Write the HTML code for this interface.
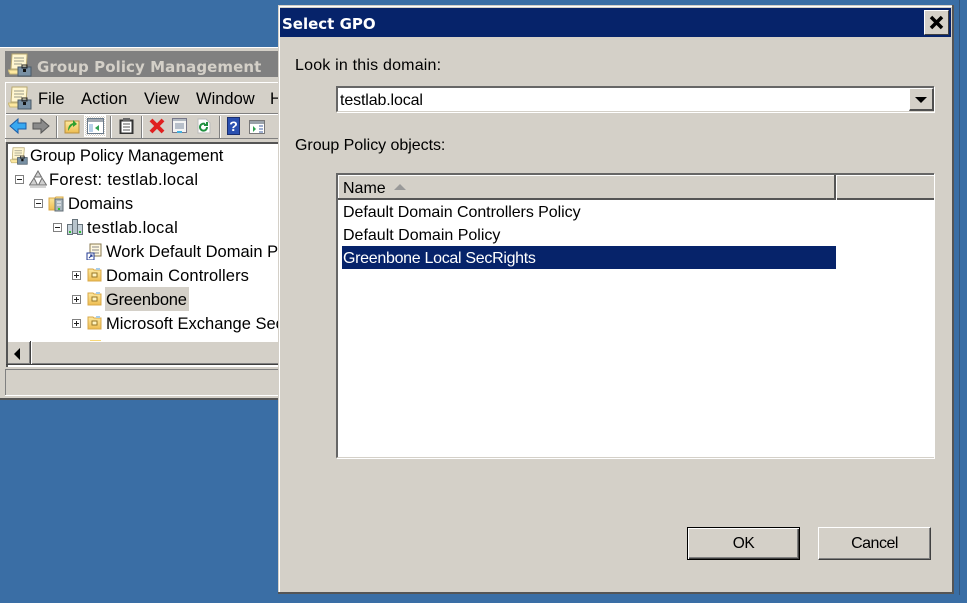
<!DOCTYPE html>
<html><head><meta charset="utf-8"><style>
html,body{margin:0;padding:0;width:967px;height:603px;overflow:hidden;background:#3a6ea5}
body{position:relative;font-family:"Liberation Sans",sans-serif;font-size:16px;color:#000}
div,svg,span.t{position:absolute}
.t{white-space:nowrap;line-height:20px;font-size:16.5px}
.b{background:#d4d0c8}
.pm{width:7px;height:7px;border:1px solid #808080;background:#fff}
.pm:before{content:"";position:absolute;left:1px;top:3px;width:5px;height:1px;background:#222}
.pm.p:after{content:"";position:absolute;left:3px;top:1px;width:1px;height:5px;background:#222}
.sep{width:1px;height:22px;background:#808080;border-right:1px solid #fff}
</style></head><body>
<svg width="0" height="0" style="position:absolute"><defs>
<linearGradient id="g1" x1="0" y1="0" x2="0" y2="1"><stop offset="0" stop-color="#fde9a0"/><stop offset="1" stop-color="#eebc50"/></linearGradient>
<symbol id="scroll" viewBox="0 0 24 24"><path d="M4 1h15v2l-1 13H3z" fill="#fff6d0" stroke="#b8a870"/><path d="M0 17h11v4H2z" fill="#fde8a0" stroke="#c8b878"/><path d="M6 5h10M6 8h10M6 11h8" stroke="#9a9a88"/><rect x="10" y="14" width="13" height="9" fill="#7890a4" stroke="#4a5a68"/><rect x="14" y="12" width="5" height="3" fill="none" stroke="#222"/><rect x="15" y="16" width="3" height="3" fill="#111"/></symbol>
<symbol id="folder" viewBox="0 0 15 15"><path d="M1 2h5l1 1h7v11H1z" fill="url(#g1)" stroke="#d8a848"/><rect x="5" y="6" width="5" height="4" fill="#fff4c0" stroke="#987828"/><rect x="9" y="1" width="4" height="2" fill="#a8cce8"/></symbol>
</defs></svg>

<div style="left:959px;top:0;width:1px;height:595px;background:#33557a"></div>

<!-- left window -->
<div class="b" style="left:0;top:47px;width:278px;height:353px;border-top:1px solid #fff;border-bottom:2px solid #555;box-sizing:border-box"></div>
<div style="left:5px;top:51px;width:273px;height:26px;background:#808080"></div>
<svg style="left:8px;top:53px" width="24" height="24"><use href="#scroll"/></svg>
<span class="t" style="left:37px;top:57px;color:#d4d0c8;font-family:'DejaVu Sans',sans-serif;font-weight:bold;font-size:15px;letter-spacing:.08px">Group Policy Management</span>
<div style="left:5px;top:82px;width:273px;height:1px;background:#fff"></div>
<div style="left:5px;top:82px;width:1px;height:60px;background:#fff"></div>
<svg style="left:8px;top:86px" width="24" height="24"><use href="#scroll"/></svg>
<span class="t" style="left:38px;top:89px">File</span>
<span class="t" style="left:81px;top:89px;letter-spacing:.1px">Action</span>
<span class="t" style="left:144px;top:89px">View</span>
<span class="t" style="left:196px;top:89px">Window</span>
<span class="t" style="left:270px;top:89px;width:8px;overflow:hidden">H</span>
<div style="left:6px;top:113px;width:272px;height:1px;background:#808080"></div>
<div style="left:6px;top:114px;width:272px;height:1px;background:#fff"></div>

<!-- toolbar -->
<svg style="left:9px;top:117px" width="18" height="18"><path d="M1 9l8-7v4h8v6H9v4z" fill="#38a8f0" stroke="#1a5ca8"/></svg>
<svg style="left:32px;top:117px" width="18" height="18"><path d="M17 9l-8-7v4H1v6h8v4z" fill="#8a8a8a" stroke="#555"/></svg>
<div class="sep" style="left:56px;top:116px"></div>
<svg style="left:64px;top:117px" width="16" height="17"><path d="M1 4h14v12H1z" fill="url(#g1)" stroke="#b89040"/><path d="M4 14c0-5 2-7 5-8V3l4 4-4 3V8c-2 1-3 3-5 6z" fill="#30a030"/></svg>
<div style="left:84px;top:115px;width:22px;height:22px;border:1px solid #fff;box-sizing:border-box;background:repeating-conic-gradient(#fff 0 25%,#d4d0c8 0 50%) 0 0/2px 2px"></div>
<svg style="left:87px;top:118px" width="17" height="17"><rect x=".5" y=".5" width="16" height="15" fill="#fff" stroke="#6a7a8a"/><rect x="1" y="1" width="15" height="3" fill="#a0a8b0"/><rect x="2" y="6" width="4" height="8" fill="#b8d0e8"/><path d="M12 7v6l-4-3z" fill="#30a050"/></svg>
<div class="sep" style="left:110px;top:116px"></div>
<svg style="left:119px;top:118px" width="15" height="16"><rect x="1.500" y="2.500" width="12" height="13" fill="#fff" stroke="#333" stroke-width="2"/><rect x="4" y="0" width="7" height="3" fill="#666"/><path d="M4 6h7M4 9h7M4 12h7" stroke="#555"/></svg>
<div class="sep" style="left:141px;top:116px"></div>
<svg style="left:148px;top:117px" width="18" height="18"><path d="M3 3l12 12M15 3L3 15" stroke="#e02020" stroke-width="4"/></svg>
<svg style="left:172px;top:118px" width="16" height="16"><rect x=".5" y=".5" width="14" height="14" fill="#f4f4f4" stroke="#778"/><rect x="1" y="1" width="13" height="2" fill="#b0b8c0"/><path d="M3 6h9M3 8h9M3 10h9" stroke="#7a8aa0"/><rect x="5" y="13" width="5" height="2" fill="#40b0e0"/></svg>
<svg style="left:197px;top:118px" width="14" height="16"><path d="M1 1h8l4 4v10H1z" fill="#fff" stroke="#bbb"/><path d="M10 9a3.500 3.500 0 1 1-2-3M10 4v3H7" fill="none" stroke="#209040" stroke-width="2"/></svg>
<div class="sep" style="left:219px;top:116px"></div>
<div style="left:227px;top:117px;width:11px;height:16px;background:#2a50b0;border:1px solid #1a2f70;color:#fff;font:bold 14px/16px 'Liberation Sans',sans-serif;text-align:center">?</div>
<svg style="left:249px;top:120px" width="16" height="15"><rect x=".5" y=".5" width="15" height="13" fill="#fff" stroke="#777"/><rect x="1" y="1" width="14" height="3" fill="#9aa2aa"/><path d="M4 6v6l3-3z" fill="#30a050"/><path d="M10 6h4M10 9h4M10 12h4" stroke="#4060a0"/></svg>
<div style="left:5px;top:138px;width:273px;height:1px;background:#808080"></div>

<!-- tree -->
<div style="left:6px;top:142px;width:272px;height:225px;border-top:2px solid #555;border-left:2px solid #555;box-sizing:border-box;background:#fff"></div>
<svg style="left:10px;top:147px" width="18" height="18"><use href="#scroll"/></svg>
<span class="t" style="left:30px;top:146px;letter-spacing:-.09px">Group Policy Management</span>
<div class="pm" style="left:15px;top:175px"></div>
<svg style="left:29px;top:170px" width="18" height="18"><path d="M9 1l3.500 6h-7zM5 8l3.500 7h-8zM13 8l4.500 7h-8z" fill="#d0d0d0" stroke="#707070"/><path d="M1 17h16" stroke="#aaa"/></svg>
<span class="t" style="left:49px;top:170px;letter-spacing:.3px">Forest: testlab.local</span>
<div class="pm" style="left:34px;top:199px"></div>
<svg style="left:48px;top:195px" width="17" height="17"><path d="M1 3h6l1-1h7v13H1z" fill="url(#g1)" stroke="#d8a848"/><rect x="7" y="4" width="8" height="12" fill="#a8b4bc" stroke="#606c74"/><path d="M9 7h4M9 10h4" stroke="#fff"/><rect x="10" y="13" width="2" height="2" fill="#30c030"/></svg>
<span class="t" style="left:68px;top:194px">Domains</span>
<div class="pm" style="left:53px;top:223px"></div>
<svg style="left:67px;top:219px" width="16" height="16"><rect x="5.500" y=".5" width="5" height="14" fill="#b8c4cc" stroke="#66727a"/><rect x=".5" y="5.500" width="5" height="10" fill="#c8d4dc" stroke="#66727a"/><rect x="10.500" y="5.500" width="5" height="10" fill="#c8d4dc" stroke="#66727a"/><rect x="2" y="12" width="2" height="2" fill="#30c030"/><rect x="12" y="12" width="2" height="2" fill="#30c030"/></svg>
<span class="t" style="left:87px;top:218px;letter-spacing:.3px">testlab.local</span>
<svg style="left:86px;top:243px" width="16" height="17"><path d="M4 1h11v12H4z" fill="#fff8e0" stroke="#8a7a50"/><path d="M6 4h7M6 7h7M6 10h7" stroke="#888"/><rect x="1" y="10" width="7" height="7" fill="#fff" stroke="#223a90"/><path d="M3 15l3-3M4 12h2v2" stroke="#223a90"/></svg>
<span class="t" style="left:106px;top:242px;width:172px;overflow:hidden">Work Default Domain Policy</span>
<div class="pm" style="left:72px;top:271px"></div><div class="pm p" style="left:72px;top:271px"></div>
<svg style="left:87px;top:267px" width="15" height="15"><use href="#folder"/></svg>
<span class="t" style="left:106px;top:266px;letter-spacing:.1px">Domain Controllers</span>
<div style="left:105px;top:287px;width:84px;height:24px;background:#d4d0c8"></div>
<div class="pm" style="left:72px;top:295px"></div><div class="pm p" style="left:72px;top:295px"></div>
<svg style="left:87px;top:291px" width="15" height="15"><use href="#folder"/></svg>
<span class="t" style="left:106px;top:290px;letter-spacing:-.2px">Greenbone</span>
<div class="pm" style="left:72px;top:319px"></div><div class="pm p" style="left:72px;top:319px"></div>
<svg style="left:87px;top:315px" width="15" height="15"><use href="#folder"/></svg>
<span class="t" style="left:106px;top:314px;width:172px;overflow:hidden">Microsoft Exchange Security</span>
<div style="left:90px;top:340px;width:11px;height:2px;background:#f8d878"></div>

<!-- scrollbar -->
<div class="b" style="left:8px;top:341px;width:270px;height:24px;border-top:1px solid #fff;box-sizing:border-box"></div>
<div class="b" style="left:8px;top:342px;width:22px;height:22px;box-shadow:inset -1px -1px #808080"></div>
<div style="left:30px;top:341px;width:1px;height:24px;background:#404040"></div>
<div style="left:31px;top:342px;width:1px;height:22px;background:#fff"></div>
<div style="left:14px;top:348px;width:0;height:0;border:6px solid transparent;border-left:0;border-right:6px solid #000"></div>
<div style="left:32px;top:363px;width:246px;height:1px;background:#808080"></div>
<div style="left:6px;top:364px;width:272px;height:1px;background:#404040"></div>
<!-- status -->
<div style="left:5px;top:369px;width:273px;height:1px;background:#808080"></div>
<div style="left:5px;top:369px;width:1px;height:27px;background:#808080"></div>
<div style="left:5px;top:395px;width:273px;height:1px;background:#fff"></div>

<!-- dialog -->
<div class="b" style="left:278px;top:5px;width:676px;height:589px;border-right:2px solid #555;border-bottom:2px solid #555;box-sizing:border-box"></div>
<div style="left:279px;top:6px;width:673px;height:1px;background:#fff"></div>
<div style="left:279px;top:6px;width:1px;height:586px;background:#fff"></div>
<div style="left:280px;top:8px;width:671px;height:29px;background:#06236a"></div>
<span class="t" style="left:282px;top:14px;color:#fff;font-family:'DejaVu Sans',sans-serif;font-weight:bold;font-size:15px">Select GPO</span>
<div class="b" style="left:924px;top:10px;width:25px;height:25px;box-sizing:border-box;border:1px solid;border-color:#fff #404040 #404040 #fff"></div>
<svg style="left:929px;top:15px" width="15" height="15"><path d="M2 2l11 11M13 2L2 13" stroke="#000" stroke-width="3.500"/></svg>

<span class="t" style="left:295px;top:56px;font-size:16px;letter-spacing:.2px">Look in this domain:</span>
<div style="left:336px;top:86px;width:598px;height:26px;background:#fff;box-sizing:border-box;border-top:2px solid #666;border-left:2px solid #666;border-bottom:1px solid #d4d0c8;box-shadow:1px 1px 0 #fff"></div>
<span class="t" style="left:340px;top:91px;font-size:16px;letter-spacing:-.13px">testlab.local</span>
<div class="b" style="left:909px;top:88px;width:25px;height:23px;box-sizing:border-box;border-left:1px solid #fff;border-top:1px solid #fff;border-right:2px solid #505050;border-bottom:2px solid #505050"></div>
<div style="left:915px;top:97px;width:0;height:0;border:6px solid transparent;border-bottom:0;border-top:6px solid #000"></div>

<span class="t" style="left:295px;top:136px;font-size:16px;letter-spacing:-.04px">Group Policy objects:</span>

<div style="left:336px;top:173px;width:598px;height:285px;background:#fff;box-sizing:border-box;border-top:2px solid #666;border-left:2px solid #666;border-bottom:1px solid #d4d0c8;box-shadow:1px 1px 0 #fff"></div>
<div class="b" style="left:338px;top:175px;width:596px;height:25px;border-top:1px solid #fff;border-bottom:2px solid #555;box-sizing:border-box"></div>
<div style="left:338px;top:175px;width:1px;height:23px;background:#fff"></div>
<div style="left:834px;top:175px;width:2px;height:25px;background:#555"></div>
<div style="left:836px;top:175px;width:1px;height:25px;background:#fff"></div>
<span class="t" style="left:343px;top:179px;font-size:16px">Name</span>
<div style="left:394px;top:184px;width:0;height:0;border:6px solid transparent;border-top:0;border-bottom:6px solid #999"></div>
<span class="t" style="left:343px;top:203px;font-size:16px;letter-spacing:-.05px">Default Domain Controllers Policy</span>
<span class="t" style="left:343px;top:226px;font-size:16px">Default Domain Policy</span>
<div style="left:342px;top:246px;width:494px;height:23px;background:#06236a"></div>
<span class="t" style="left:343px;top:249px;font-size:16px;letter-spacing:-.3px;color:#fff">Greenbone Local SecRights</span>

<div class="b" style="left:687px;top:527px;width:113px;height:33px;box-sizing:border-box;border:1px solid #000;box-shadow:inset 1px 1px #fff,inset -1px -1px #404040,inset -2px -2px #808080"></div>
<span class="t" style="left:687px;top:534px;width:113px;text-align:center;font-size:15.500px;letter-spacing:-.4px">OK</span>
<div class="b" style="left:818px;top:527px;width:113px;height:33px;box-sizing:border-box;border:1px solid;border-color:#fff #404040 #404040 #fff;box-shadow:inset -1px -1px #808080"></div>
<span class="t" style="left:818px;top:534px;width:113px;text-align:center;font-size:16px;letter-spacing:-.5px">Cancel</span>
</body></html>
